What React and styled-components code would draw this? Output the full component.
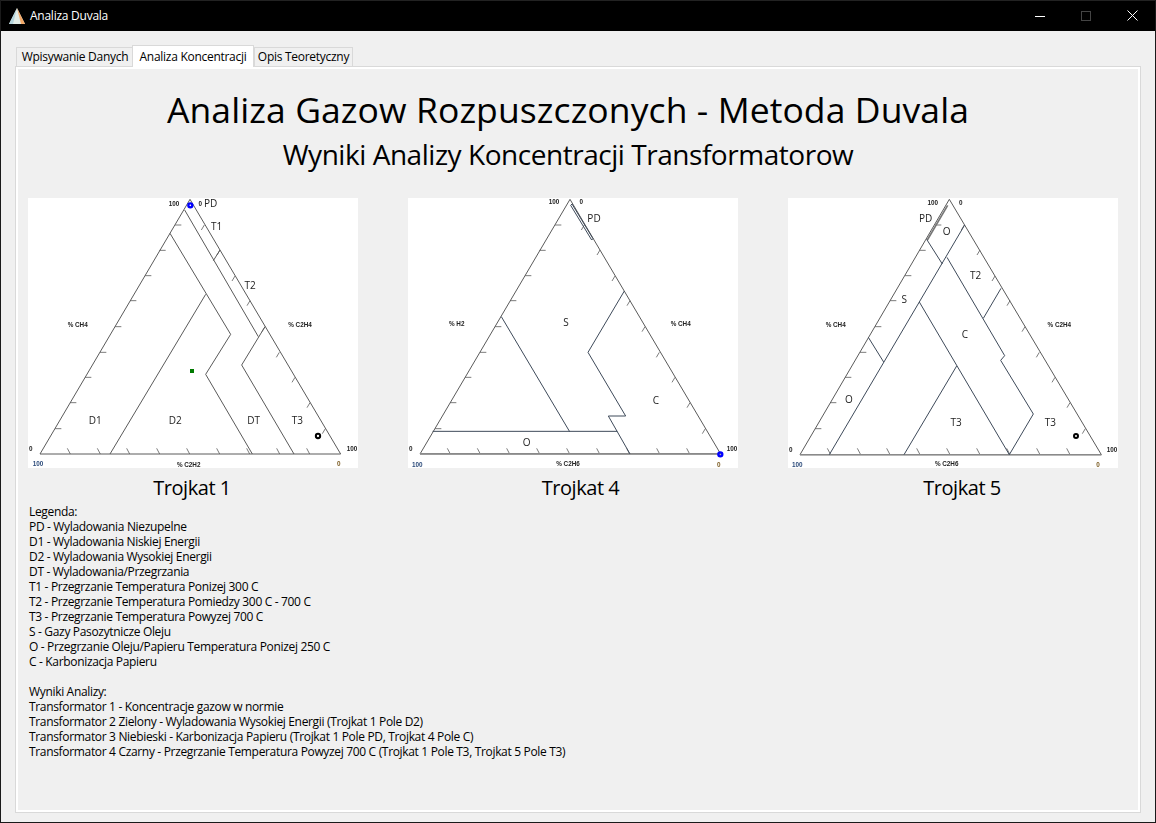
import React from "react";
import styled, { createGlobalStyle } from "styled-components";

const Global = createGlobalStyle`
  html, body { margin: 0; padding: 0; background: #f0f0f0; }
  body { font-family: "Open Sans", "Noto Sans", sans-serif; }
`;
const Win = styled.div`
  width: 1156px; height: 823px; box-sizing: border-box; display: flex; flex-direction: column;
  background: #f0f0f0; border: 1px solid #1a1a1a; border-top: none; overflow: hidden;
`;
const TitleBar = styled.div`
  height: 31px; box-sizing: border-box; flex: none; background: #000; color: #fff; display: flex; align-items: center;
  margin: 0 -1px; padding: 0 1px 1px 9px; font-size: 12px; letter-spacing: -.25px; border-top: 1px solid #222;
`;
const AppIcon = styled.svg` width: 16px; height: 16px; margin-right: 5px; `;
const TitleText = styled.span` flex: 1; `;
const WinBtn = styled.div`
  width: 46px; height: 29px; display: flex; align-items: center; justify-content: center;
`;
const Body = styled.div` flex: 1; display: flex; flex-direction: column; padding: 14px 14px 9px 14px; min-height: 0; `;
const Tabs = styled.div` display: flex; align-items: flex-end; height: 22px; padding-left: 1px; position: relative; z-index: 1; `;
const Tab = styled.div`
  box-sizing: border-box; height: ${p => p.$active ? 22 : 20}px; width: ${p => p.$w}px;
  font-size: 12px; letter-spacing: -.28px; color: #000; background: ${p => p.$active ? "#fff" : "#f0f0f0"};
  border: 1px solid #d9d9d9; border-bottom: ${p => p.$active ? "none" : "1px solid #d9d9d9"};
  margin-right: ${p => p.$active ? 0 : -1}px; margin-left: ${p => p.$active ? -1 : 0}px;
  display: flex; align-items: center; justify-content: center; padding-bottom: 1px;
`;
const Panel = styled.div`
  flex: 1; box-sizing: border-box; border: 1px solid #d9d9d9; outline: 2px solid #fff; outline-offset: -3px;
  margin-top: -1px; padding: 17px 11px 0 12px; display: flex; flex-direction: column; min-height: 0;
`;
const Header = styled.header` width: 1080px; `;
const H1 = styled.h1`
  margin: 0; font-weight: 400; font-size: 35.5px; line-height: 50px; text-align: center; letter-spacing: .09px; color: #000;
`;
const H2 = styled.h2`
  margin: 0; font-weight: 400; font-size: 28px; line-height: 41px; text-align: center; letter-spacing: -.46px; color: #000;
`;
const Charts = styled.div` display: flex; gap: 50px; margin-top: 23px; `;
const Chart = styled.figure` margin: 0; width: 330px; `;
const Plot = styled.svg` display: block; width: 330px; height: 270px; background: #fff; filter: blur(.35px); overflow: visible; `;
const Caption = styled.figcaption`
  font-size: 20px; line-height: 27px; margin-top: 6px; text-align: center; letter-spacing: -.45px;
  transform: translateX(${p => p.$shift}px);
`;
const Notes = styled.div` margin: 3px 0 0 1px; font-size: 12px; line-height: 15px; letter-spacing: -.33px; white-space: pre; color: #000; `;

const ink = "#5a5a5a";
const dark = "#3e4a5a";

const Line = ({ d, c = ink, w = 3 }) => <path d={d} fill="none" stroke={c} strokeWidth={w} />;
const Small = ({ x, y, children, c = "#222" }) => (
  <text x={x} y={y} fontFamily="Liberation Sans" fontWeight="700" fontSize="19" textAnchor="middle" fill={c}>{children}</text>
);
const Zone = ({ x, y, children }) => (
  <text x={x} y={y} fontFamily="Open Sans" fontSize="30" textAnchor="middle" fill="#222">{children}</text>
);
const leftTicks = [[465,105],[418,181],[375,257],[330,332],[285,410],[240,487],[195,562],[150,638],[105,716]];
const rightTicks = [[553,105],[600,180],[645,258],[690,332],[735,410],[778,487],[825,562],[870,638],[916,716]];
const botTicks = [142,232,320,410,500,590,680,770,860];
const Ticks = () => (
  <g>
    {leftTicks.map(([x, y]) => <Line key={y} d={`M${x} ${y}h19`} w={2.4} />)}
    {rightTicks.map(([x, y]) => <Line key={y} d={`M${x} ${y}l-9 15`} w={2.4} />)}
    {botTicks.map(x => <Line key={x} d={`M${x} 775l9 17`} w={2.4} />)}
  </g>
);
const Frame = ({ children }) => <Plot viewBox="24 24 990 810">{children}</Plot>;

const Tri1 = () => (
  <Frame>
    <Ticks />
    <Line d="M510 28L60 792H962Z" />
    <Line d="M494 60L715 440M735 410L665 525L822 792M600 180L580 212M450 130L632 433L557 553L697 792M557 313L270 792" />
    <Small x="462" y="49">100</Small><Small x="541" y="49">0</Small>
    <Small x="32" y="782">0</Small><Small x="996" y="782">100</Small>
    <Small x="54" y="828" c="#2b4a7a">100</Small><Small x="956" y="828" c="#7a5a20">0</Small>
    <Small x="173" y="411">% CH4</Small><Small x="840" y="411">% C2H4</Small><Small x="506" y="830">% C2H2</Small>
    <Zone x="572" y="50">PD</Zone><Zone x="590" y="120">T1</Zone><Zone x="690" y="298">T2</Zone>
    <Zone x="226" y="701">D1</Zone><Zone x="466" y="701">D2</Zone><Zone x="701" y="701">DT</Zone><Zone x="832" y="701">T3</Zone>
    <circle cx="511" cy="46" r="6" fill="none" stroke="#0000ff" strokeWidth="7" />
    <rect x="510" y="537" width="12" height="12" fill="#007a00" />
    <circle cx="894" cy="738" r="6.5" fill="none" stroke="#000" strokeWidth="6" />
  </Frame>
);
const Tri4 = () => (
  <Frame>
    <Ticks />
    <Line d="M510 28L60 792H962Z" />
    <Line d="M60 791H962" c="#8a8a8a" w={4.5} />
    <Line d="M512 46L575 150L579 146L516 42Z" c={dark} />
    <Line d="M673 303L564 487L677 678H625L690 792M304 380L509 725" c={dark} />
    <Line d="M98 724H652" c={dark} />
    <Small x="462" y="42">100</Small><Small x="544" y="42">0</Small>
    <Small x="32" y="783">0</Small><Small x="996" y="783">100</Small>
    <Small x="52" y="830" c="#2b4a7a">100</Small><Small x="956" y="830" c="#7a5a20">0</Small>
    <Small x="170" y="408">% H2</Small><Small x="842" y="408">% CH4</Small><Small x="504" y="829">% C2H6</Small>
    <Zone x="582" y="97">PD</Zone><Zone x="498" y="409">S</Zone><Zone x="768" y="642">C</Zone><Zone x="380" y="768">O</Zone>
    <circle cx="961" cy="793" r="6" fill="none" stroke="#0000ff" strokeWidth="7" />
  </Frame>
);
const Tri5 = () => (
  <Frame>
    <Ticks />
    <Line d="M508 28L60 794H964Z" />
    <Line d="M60 794H964" c="#8a8a8a" w={4.5} />
    <Line d="M503 46L442 150" c="#777" w={5} />
    <Line d="M440 148L487 222M554 105L148 794M501 202L674 497L662 511L760 672L688 794M663 295L610 385M418 336L688 794M530 528L372 794M265 442L311 516" c={dark} />
    <Small x="458" y="46">100</Small><Small x="542" y="46">0</Small>
    <Small x="32" y="785">0</Small><Small x="996" y="785">100</Small>
    <Small x="52" y="830" c="#2b4a7a">100</Small><Small x="954" y="830" c="#7a5a20">0</Small>
    <Small x="167" y="411">% CH4</Small><Small x="838" y="411">% C2H4</Small><Small x="500" y="829">% C2H6</Small>
    <Zone x="437" y="96">PD</Zone><Zone x="500" y="134">O</Zone><Zone x="587" y="266">T2</Zone><Zone x="373" y="339">S</Zone>
    <Zone x="555" y="445">C</Zone><Zone x="207" y="639">O</Zone><Zone x="528" y="709">T3</Zone><Zone x="811" y="709">T3</Zone>
    <circle cx="888" cy="738" r="6" fill="none" stroke="#000" strokeWidth="6" />
  </Frame>
);

const notes = `Legenda:
PD - Wyladowania Niezupelne
D1 - Wyladowania Niskiej Energii
D2 - Wyladowania Wysokiej Energii
DT - Wyladowania/Przegrzania
T1 - Przegrzanie Temperatura Ponizej 300 C
T2 - Przegrzanie Temperatura Pomiedzy 300 C - 700 C
T3 - Przegrzanie Temperatura Powyzej 700 C
S - Gazy Pasozytnicze Oleju
O - Przegrzanie Oleju/Papieru Temperatura Ponizej 250 C
C - Karbonizacja Papieru

Wyniki Analizy:
Transformator 1 - Koncentracje gazow w normie
Transformator 2 Zielony - Wyladowania Wysokiej Energii (Trojkat 1 Pole D2)
Transformator 3 Niebieski - Karbonizacja Papieru (Trojkat 1 Pole PD, Trojkat 4 Pole C)
Transformator 4 Czarny - Przegrzanie Temperatura Powyzej 700 C (Trojkat 1 Pole T3, Trojkat 5 Pole T3)`;

export default function App() {
  return (
    <Win>
      <Global />
      <TitleBar>
        <AppIcon viewBox="0 0 16 16">
          <path d="M8 0L16 16H0Z" fill="#e2ece6" />
          <path d="M8 0L12 16H16Z" fill="#f2a868" />
          <path d="M8 0L4 16H0Z" fill="#b4d4dc" />
        </AppIcon>
        <TitleText>Analiza Duvala</TitleText>
        <WinBtn><svg width="10" height="10"><path d="M0 5.5H10" stroke="#fff" /></svg></WinBtn>
        <WinBtn><svg width="10" height="10"><rect x=".5" y=".5" width="9" height="9" fill="none" stroke="#444" /></svg></WinBtn>
        <WinBtn><svg width="11" height="11"><path d="M.5 .5L10.5 10.5M10.5 .5L.5 10.5" stroke="#fff" /></svg></WinBtn>
      </TitleBar>
      <Body>
        <Tabs>
          <Tab $w={118}>Wpisywanie Danych</Tab>
          <Tab $active $w={122}>Analiza Koncentracji</Tab>
          <Tab $w={99}>Opis Teoretyczny</Tab>
        </Tabs>
        <Panel>
          <Header>
            <H1>Analiza Gazow Rozpuszczonych - Metoda Duvala</H1>
            <H2>Wyniki Analizy Koncentracji Transformatorow</H2>
          </Header>
          <Charts>
            <Chart><Tri1 /><Caption $shift={-1}>Trojkat 1</Caption></Chart>
            <Chart><Tri4 /><Caption $shift={7.5}>Trojkat 4</Caption></Chart>
            <Chart><Tri5 /><Caption $shift={9}>Trojkat 5</Caption></Chart>
          </Charts>
          <Notes>{notes}</Notes>
        </Panel>
      </Body>
    </Win>
  );
}
